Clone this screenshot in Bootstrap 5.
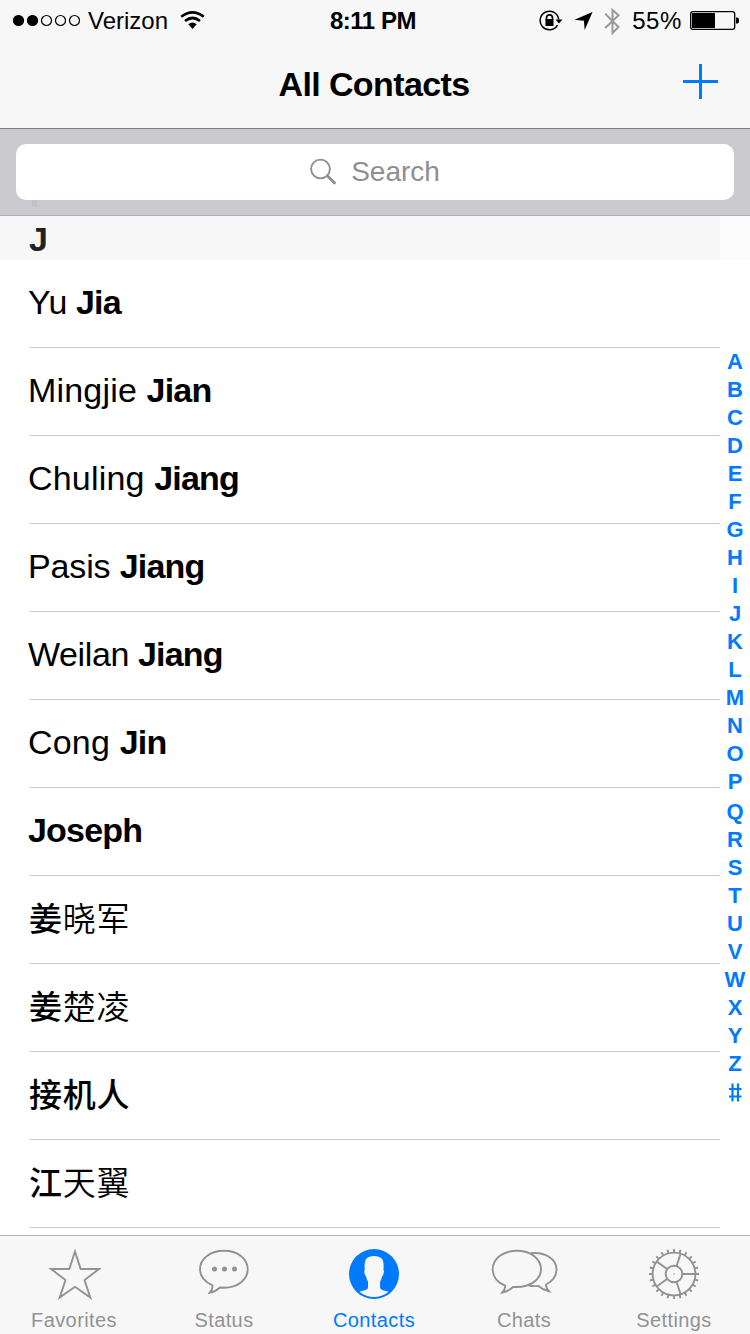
<!DOCTYPE html>
<html lang="en">
<head>
<meta charset="utf-8">
<meta name="viewport" content="width=device-width, initial-scale=1">
<title>All Contacts</title>
<link href="https://cdn.jsdelivr.net/npm/bootstrap@5.3.0/dist/css/bootstrap.min.css" rel="stylesheet">
<style>
body{width:750px;height:1334px;font-family:"Liberation Sans","Noto Sans CJK SC",sans-serif;color:#000;background:#fff;overflow:hidden}
svg{display:block;flex:none}
.top-area{height:129px;background:#f7f7f7;border-bottom:1px solid #7e7e82}
.status-bar{height:40px;font-size:24px;line-height:40px;padding-top:1px}
.status-bar .side{width:300px}
.clock{font-weight:700;letter-spacing:-.5px;margin-left:30px}
.title-bar{height:88px}
.title-bar h1{font-size:34px;font-weight:700;letter-spacing:-.6px;line-height:88px;padding-right:2px}
.add-btn{right:32px;top:24px}
.search-area{height:87px;padding:15px 16px;background:#c9c9ce;border-bottom:1px solid #b2b2b5}
.search-field{height:56px;border-radius:10px;color:#8e8e93;font-size:28px;gap:14px}
.ghost{left:32px;top:200px;width:5px;height:7px;background:#c3c3c5}
.main-area{height:1019px}
.section-head{height:44px;background:#f7f7f7;font-size:34px;font-weight:700;line-height:47px;padding-left:29px;color:#222}
.list-group .contact{height:88px;padding:0;margin-left:30px;border:0;border-bottom:1px solid #c8c7cc;font-size:34px;line-height:84px;white-space:pre;color:#000;border-radius:0}
.contact span{margin-left:-2px}
.contact b{letter-spacing:-.8px}
.contact .tight{letter-spacing:-.4px}
.contact .snug{letter-spacing:-.15px}
.contact .loose{letter-spacing:.18px}
.contact.cjk{font-family:"Noto Sans CJK SC",sans-serif;font-weight:350;font-size:33px;letter-spacing:.8px;line-height:82px}
.contact.cjk span{margin-left:-1px}
.contact.cjk b{letter-spacing:.8px;font-weight:500}
.index-col{width:30px;color:#007aff;font-size:22px;font-weight:700;background:linear-gradient(#fcfcfc 44px,#fff 44px);padding-top:131px}
.index-col div{height:28px;line-height:30px;text-align:center}
.index-col .gap-above{margin-top:2px}
.tab-bar{height:99px;background:#f7f7f7;border-top:1px solid #b2b2b2;font-size:20px;letter-spacing:.4px}
.tab-bar a{width:150px;color:#929292;text-decoration:none;padding-top:13px;padding-right:2px}
.tab-bar a.active{color:#007aff}
.tab-bar span{line-height:24px;margin-top:7px}
</style>
</head>
<body>
<header class="top-area">
  <div class="status-bar d-flex">
    <div class="side d-flex align-items-center">
      <svg width="82" height="40" viewBox="0 0 82 40"><g stroke="#000" stroke-width="1.2"><circle cx="18.5" cy="19.5" r="5"/><circle cx="32.5" cy="19.5" r="5"/><g fill="none"><circle cx="46.5" cy="19.5" r="5"/><circle cx="60.5" cy="19.5" r="5"/><circle cx="74.5" cy="19.5" r="5"/></g></g></svg>
      <span style="margin-left:6px">Verizon</span>
      <svg style="margin-left:12px" width="26" height="40" viewBox="0 0 26 40"><g fill="none" stroke="#000" stroke-width="2.7"><path d="M1.2 15.8Q12.500 7 23.800 15.800"/><path d="M5 20Q12.500 14 20 20"/></g><path d="M8.300 23.200Q12.500 19.800 16.700 23.200L12.500 28Z"/></svg>
    </div>
    <div class="clock">8:11 PM</div>
    <svg class="ms-auto" width="86" height="40" viewBox="538.500 0 86 40"><g fill="none" stroke="#000" stroke-width="1.500"><path d="M557 24.200A9.300 9.300 0 1 1 558.200 18.500"/><path d="M546 19V16.800a3 3 0 0 1 6 0V19" stroke-width="1.700"/></g><path d="M545 18h8v7h-8zM555 18.500h7l-3.500 4zM592 11l-7.800 18-.8-9.200-9.400-1Z"/><path d="M604.700 12.800L618 26l-6 6V9l6 5.200L604.700 27" fill="none" stroke="#999" stroke-width="2"/></svg>
    <span style="margin-left:7px;letter-spacing:.6px">55%</span>
    <svg style="margin:0 10px 0 8px" width="50" height="40" viewBox="690 0 50 40"><rect x="690.700" y="10.700" width="44" height="17.600" rx="2.200" fill="none" stroke="#000" stroke-width="1.300"/><path d="M692 12h23v15h-23zM736 16.500h1.500q1.500 0 1.500 3t-1.500 3H736z"/></svg>
  </div>
  <div class="title-bar position-relative text-center">
    <h1 class="m-0">All Contacts</h1>
    <svg class="add-btn position-absolute" width="35" height="35"><path d="M17.500 0v35M0 17.500h35" stroke="#007aff" stroke-width="3"/></svg>
  </div>
</header>
<div class="search-area">
  <div class="search-field bg-white d-flex align-items-center justify-content-center">
    <svg width="27" height="28" viewBox="0 0 27 28"><circle cx="10.500" cy="11" r="9.400" fill="none" stroke="#8e8e93" stroke-width="1.900"/><path d="M17.300 17.800l8 8" stroke="#8e8e93" stroke-width="2.800"/></svg>
    <span>Search</span>
  </div>
</div>
<div class="ghost position-absolute"></div>
<main class="main-area d-flex overflow-hidden">
  <div class="flex-grow-1">
    <div class="section-head">J</div>
    <div class="list-group">
      <div class="list-group-item contact"><span class="tight">Yu <b>Jia</b></span></div>
      <div class="list-group-item contact"><span class="loose">Mingjie <b>Jian</b></span></div>
      <div class="list-group-item contact"><span class="loose">Chuling <b>Jiang</b></span></div>
      <div class="list-group-item contact"><span class="snug">Pasis <b>Jiang</b></span></div>
      <div class="list-group-item contact"><span class="tight">Weilan <b>Jiang</b></span></div>
      <div class="list-group-item contact"><span class="loose">Cong <b>Jin</b></span></div>
      <div class="list-group-item contact"><span><b>Joseph</b></span></div>
      <div class="list-group-item contact cjk"><span><b>姜</b>晓军</span></div>
      <div class="list-group-item contact cjk"><span><b>姜</b>楚凌</span></div>
      <div class="list-group-item contact cjk"><span><b>接机人</b></span></div>
      <div class="list-group-item contact cjk"><span><b>江</b>天翼</span></div>
    </div>
  </div>
  <nav class="index-col">
    <div>A</div><div>B</div><div>C</div><div>D</div><div>E</div><div>F</div><div>G</div><div>H</div><div>I</div><div>J</div><div>K</div><div>L</div><div>M</div><div>N</div><div>O</div><div>P</div><div class="gap-above">Q</div><div>R</div><div>S</div><div>T</div><div>U</div><div>V</div><div>W</div><div>X</div><div>Y</div><div>Z</div>
    <div><svg class="mx-auto" width="14" height="30"><path d="M4.500 6.500v18M10 6.500v18M1 12h12.500M1 19.500h12.500" stroke="#007aff" stroke-width="2.200"/></svg></div>
  </nav>
</main>
<nav class="tab-bar d-flex">
  <a href="#" class="d-flex flex-column align-items-center"><svg width="54" height="52" viewBox="-2 0 54 52"><path d="M26 2.500L31.700 20H50L35.500 31L41.300 48.500L26 37.800L10.700 48.500L16.500 31L2 20H20.300Z" fill="none" stroke="#929292" stroke-width="1.900"/></svg><span>Favorites</span></a>
  <a href="#" class="d-flex flex-column align-items-center"><svg width="50" height="52" viewBox="0 0 50 52"><path d="M13.500 36.300C6 33 1 27 1 20.200C1 9.500 11.500 1.800 25 1.800S48.700 9.500 48.700 20.200S38.500 38.700 25 38.700L21 38.500Q16 43 10.800 43.700Q13.800 40 13.500 36.300Z" fill="none" stroke="#929292" stroke-width="1.900"/><g fill="#929292"><circle cx="15.500" cy="20" r="2.500"/><circle cx="25.500" cy="20" r="2.500"/><circle cx="35.500" cy="20" r="2.500"/></g></svg><span>Status</span></a>
  <a href="#" class="active d-flex flex-column align-items-center"><svg width="52" height="52" viewBox="-1 0 52 52"><circle cx="25" cy="25" r="25" fill="#007aff"/><path d="M10.500 42.800C14 41.300 18.800 41.500 19 38.500V32.500C18.300 31.300 17.300 29.500 17.100 27.500Q16 27 15.200 23Q15 21.500 15.800 21.300C15.300 17 15.500 13 17 10C18.500 8 21.500 7 25 7S31.500 8 33.200 10C34.800 13 34.900 17 34.400 21.300Q35.200 21.500 34.900 23Q34.200 27 33 27.500C32.800 29.500 31.900 31.300 31.100 32.500V38.500C31.300 41.500 36 41.300 39.500 42.800C35 46.600 30 48 25 48S15 46.600 10.500 42.800Z" fill="#f7f7f7"/></svg><span>Contacts</span></a>
  <a href="#" class="d-flex flex-column align-items-center"><svg width="67" height="52" viewBox="0 0 67 52"><g fill="none" stroke="#929292" stroke-width="1.900"><path d="M14.200 36.700C6.500 33.500 1.700 27.500 1.700 20.200C1.700 9.500 12 1.800 25.700 1.800S50 9.500 50 20.200S39 38 25.700 38L22 38Q17 42.700 11.300 43.500Q14.500 40 14.200 36.700Z"/><path d="M39.500 4.300C54 2.500 65.500 10 65.500 20.500C65.500 27.500 61 32.500 55 35.500Q54.700 39 58 42.200Q52 41 47.500 37Q42 37.500 37.300 36.300"/></g></svg><span>Chats</span></a>
  <a href="#" class="d-flex flex-column align-items-center"><svg width="52" height="52" viewBox="-26 -25 52 52"><defs><path id="teeth" d="M-25 0h3.500M21.500 0h3.500M0-25v3.500M0 21.500v3.500"/></defs><g fill="none" stroke="#929292" stroke-width="1.900"><circle r="21.400"/><use href="#teeth"/><use href="#teeth" transform="rotate(15)"/><use href="#teeth" transform="rotate(30)"/><use href="#teeth" transform="rotate(45)"/><use href="#teeth" transform="rotate(60)"/><use href="#teeth" transform="rotate(75)"/><circle r="8.300"/><path d="M8.500 0H21M2.630-8.080L6.490-19.970M-6.880-5L-16.990-12.340M-6.880 5L-16.990 12.340M2.630 8.080L6.490 19.970"/></g><circle r=".8" fill="#929292"/></svg><span>Settings</span></a>
</nav>
<script src="https://cdn.jsdelivr.net/npm/bootstrap@5.3.0/dist/js/bootstrap.bundle.min.js"></script>
</body>
</html>
